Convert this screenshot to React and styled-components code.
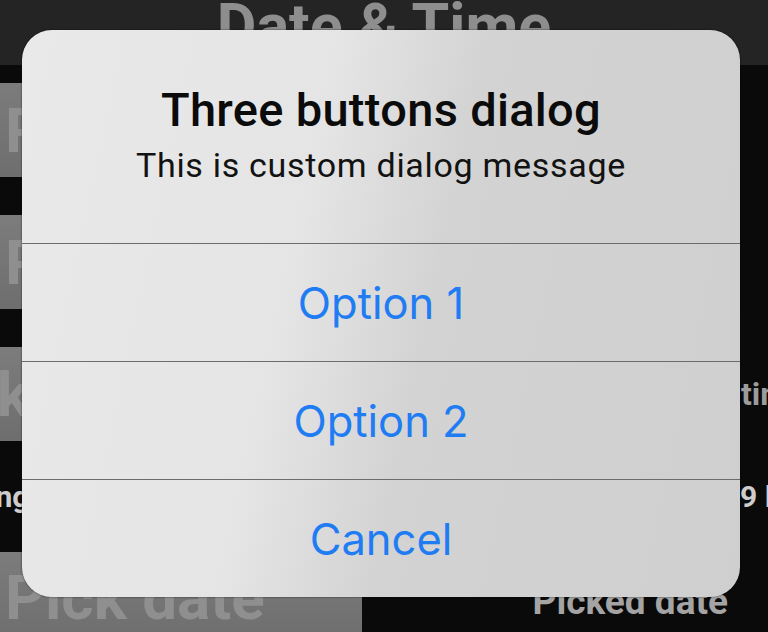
import React from 'react';
import styled, { createGlobalStyle } from 'styled-components';

const Global = createGlobalStyle`
  html, body {
    margin: 0;
    padding: 0;
    background: #0a0a0a;
  }
  * {
    box-sizing: border-box;
  }
`;

const Screen = styled.div`
  position: relative;
  width: 768px;
  height: 632px;
  overflow: hidden;
  background: #0a0a0a;
  font-family: Roboto, "Noto Sans", sans-serif;
`;

const Header = styled.div`
  height: 65px;
  background: #242424;
  display: flex;
  justify-content: center;
  overflow: hidden;
`;

const HeaderTitle = styled.div`
  margin-top: -4px;
  font-size: 61px;
  line-height: 1;
  font-weight: 700;
  color: #8e8e8e;
`;

const Body = styled.div`
  display: grid;
  grid-template-columns: 362px 1fr;
  grid-template-rows: 94px 94px 94px 35px 90px;
  row-gap: 38px;
  padding-top: 18px;
`;

const PickButton = styled.div`
  grid-column: 1;
  grid-row: ${p => p.$row};
  display: flex;
  align-items: center;
  padding-left: 5px;
  background: linear-gradient(#7c7c7c, #6e6e6e);
  color: #8f8f8f;
  font-size: 62px;
  font-weight: 700;
  white-space: nowrap;
  overflow: hidden;
  text-indent: ${p => p.$indent || 0}px;
`;

const Label = styled.div`
  grid-column: ${p => p.$col};
  grid-row: ${p => p.$row};
  display: flex;
  align-items: center;
  padding-left: ${p => p.$pad || 0}px;
  color: ${p => p.$color || '#9c9c9c'};
  font-size: ${p => p.$size || 32}px;
  font-weight: 700;
  white-space: nowrap;
  overflow: hidden;
  text-indent: ${p => p.$indent || 0}px;
`;

const PickedLabel = styled(Label)`
  justify-content: flex-end;
  padding-right: 40px;
  align-items: flex-start;
  padding-top: 28px;
  color: #a4a4a4;
  font-size: 37px;
`;

const Dialog = styled.div`
  position: absolute;
  left: 22px;
  top: 30px;
  width: 718px;
  height: 567px;
  border-radius: 30px;
  overflow: hidden;
  display: flex;
  flex-direction: column;
  background: linear-gradient(102deg, #e9e9e9 0%, #e5e5e5 38%, #d3d3d3 56%, #cfcfcf 100%);
  box-shadow: 0 0 2px rgba(0, 0, 0, 0.7);
`;

const DialogHead = styled.div`
  height: 213px;
  display: flex;
  flex-direction: column;
  align-items: center;
  padding-top: 55px;
`;

const DialogTitle = styled.div`
  font-family: Roboto, sans-serif;
  font-size: 47px;
  font-weight: 500;
  line-height: 50px;
  color: #0b0b0b;
  letter-spacing: 0.3px;
`;

const DialogMessage = styled.div`
  margin-top: 10px;
  font-family: Roboto, sans-serif;
  font-size: 34px;
  line-height: 40px;
  color: #121212;
  letter-spacing: 0.7px;
`;

const Action = styled.div`
  height: 118px;
  flex-shrink: 0;
  border-top: 1px solid #6c6c6c;
  display: flex;
  align-items: center;
  justify-content: center;
  font-family: Inter, "Liberation Sans", sans-serif;
  font-size: 43.5px;
  color: #1f7cf3;
`;

export default function App() {
  return (
    <>
      <Global />
      <Screen>
        <Header>
          <HeaderTitle>Date &amp; Time</HeaderTitle>
        </Header>
        <Body>
          <PickButton $row={1}>Pick time</PickButton>
          <PickButton $row={2}>Pick date</PickButton>
          <PickButton $row={3} $indent={-97}>Pick</PickButton>
          <Label $col={2} $row={3} $pad={379}>time</Label>
          <Label $col={1} $row={4} $indent={-52} $color="#cdcdcd" $size={30}>String</Label>
          <Label $col={2} $row={4} $pad={378} $color="#cdcdcd" $size={30}>9 lug 2019</Label>
          <PickButton $row={5}>Pick date</PickButton>
          <PickedLabel $col={2} $row={5}>Picked date</PickedLabel>
        </Body>
        <Dialog>
          <DialogHead>
            <DialogTitle>Three buttons dialog</DialogTitle>
            <DialogMessage>This is custom dialog message</DialogMessage>
          </DialogHead>
          <Action>Option 1</Action>
          <Action>Option 2</Action>
          <Action>Cancel</Action>
        </Dialog>
      </Screen>
    </>
  );
}
